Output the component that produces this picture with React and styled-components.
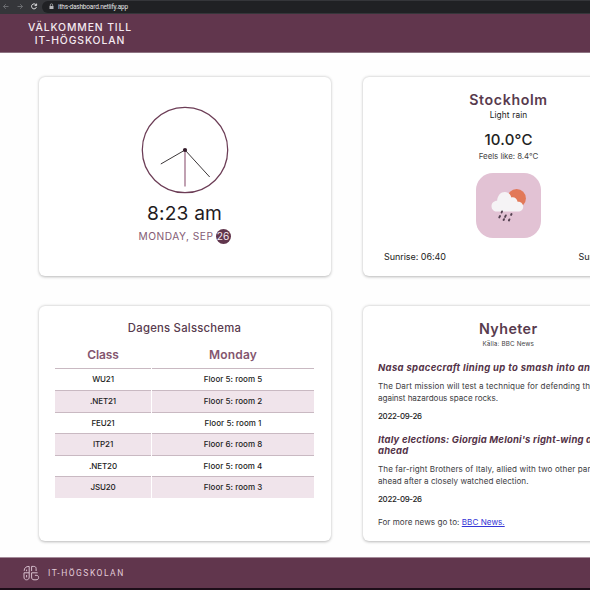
import React from 'react';
import styled, { createGlobalStyle } from 'styled-components';

const plum = '#61364d';

const GlobalStyle = createGlobalStyle`
  * { box-sizing: border-box; }
  html, body { margin: 0; overflow: hidden; background: #fff; }
  body { font-family: Inter, "Open Sans", sans-serif; color: #222; }
  h1, h2, h3, p { margin: 0; font-weight: 400; }
`;

const Page = styled.div`
  width: 100%;
  height: 590px;
  display: flex;
  flex-direction: column;
  overflow: hidden;
`;

const BrowserBar = styled.div`
  flex: 0 0 14px;
  display: flex;
  align-items: center;
  background: #35363a;
  color: #e4e4e6;
`;

const NavIcons = styled.svg`
  flex: 0 0 42px;
  height: 14px;
  fill: none;
`;

const AddressField = styled.div`
  flex: 1;
  height: 12px;
  margin-bottom: 1px;
  padding-left: 7px;
  display: flex;
  align-items: center;
  gap: 4px;
  border-radius: 6px 0 0 6px;
  background: #202124;
  font: 400 6.5px/12px Roboto, sans-serif;
  letter-spacing: -0.19px;
`;

const Header = styled.header`
  flex: 0 0 39px;
  padding: 8px 0 0 27px;
  background: ${plum};
  border-bottom: 1px solid #8d7382;
`;

const HeaderTitle = styled.h1`
  width: 106px;
  font-size: 10.4px;
  font-weight: 500;
  line-height: 12.6px;
  letter-spacing: 0.88px;
  text-align: center;
  white-space: nowrap;
  color: #f4e9f0;
`;

const Dashboard = styled.main`
  flex: 0 0 504px;
  padding: 24px 0 0 38.5px;
  display: grid;
  grid-template-columns: 292px 292px;
  grid-template-rows: 199px 235px;
  gap: 30px 32px;
  overflow: hidden;
  background: #fefefe;
`;

const Card = styled.section`
  display: flex;
  flex-direction: column;
  align-items: ${(p) => (p.$align || 'center')};
  padding: ${(p) => p.$pad};
  border-radius: 6px;
  background: #fff;
  box-shadow: 0 0.5px 3px rgba(0, 0, 0, 0.28);
  white-space: nowrap;
`;

const ClockFace = styled.svg`
  width: 88px;
  height: 88px;
  flex: none;
`;

const Time = styled.p`
  margin-top: 7px;
  font-size: 19.2px;
  line-height: 24px;
  letter-spacing: 0.18px;
  color: #1f1b1e;
`;

const DateRow = styled.div`
  margin-top: 4px;
  display: flex;
  align-items: center;
  gap: 2px;
  font-size: 10.2px;
  line-height: 15px;
  letter-spacing: 0.5px;
  color: #845b74;
`;

const DayBadge = styled.span`
  width: 15px;
  height: 15px;
  border-radius: 50%;
  background: ${plum};
  color: #f6eaf1;
  letter-spacing: -0.1px;
  text-align: center;
`;

const CardTitle = styled.h2`
  font-size: ${(p) => p.$size}px;
  font-weight: ${(p) => p.$weight || 600};
  line-height: 18px;
  letter-spacing: ${(p) => p.$spacing}px;
  text-align: center;
  color: #583b4e;
`;

const Condition = styled.p`
  margin-top: 1px;
  font-size: 8.3px;
  line-height: 11px;
  letter-spacing: 0.12px;
`;

const Temperature = styled.p`
  margin-top: 8.5px;
  font-size: 15px;
  font-weight: 500;
  line-height: 20px;
  letter-spacing: 0.2px;
`;

const FeelsLike = styled.p`
  margin-top: 1.5px;
  font-size: 7.9px;
  line-height: 11px;
  letter-spacing: -0.04px;
  color: #444;
`;

const WeatherTile = styled.div`
  width: 65px;
  height: 65px;
  margin-top: 11px;
  border-radius: 17px;
  background: #e2c2d4;
`;

const SunTimes = styled.div`
  width: 100%;
  margin-top: 13px;
  padding: 0 19px 0 21.5px;
  display: flex;
  justify-content: space-between;
  font-size: 9px;
  line-height: 12px;
  letter-spacing: -0.05px;
`;

const Schedule = styled.div`
  width: 259px;
  margin-top: 5px;
  display: grid;
  grid-template-columns: 96px 162px;
  column-gap: 1px;
  text-align: center;
`;

const ScheduleHead = styled.div`
  height: 26.4px;
  font-size: 12px;
  font-weight: 600;
  line-height: 26px;
  letter-spacing: ${(p) => p.$spacing}px;
  color: #84566f;
`;

const ScheduleCell = styled.div`
  height: 21.6px;
  border-top: 1px solid #c9b9c2;
  background: ${(p) => (p.$shaded ? '#f0e4eb' : '#fff')};
  font-size: 8px;
  font-weight: 500;
  line-height: 20.6px;
  letter-spacing: ${(p) => p.$spacing || 0}px;
`;

const Source = styled.p`
  margin-top: 2px;
  font-size: 6.3px;
  line-height: 9px;
  letter-spacing: 0.15px;
  text-align: center;
  color: #444;
`;

const Article = styled.article`
  margin-top: ${(p) => p.$top}px;
`;

const Headline = styled.h3`
  font-size: 9.5px;
  font-style: italic;
  font-weight: 700;
  line-height: 11.6px;
  letter-spacing: ${(p) => p.$spacing}px;
  color: #543348;
`;

const Summary = styled.p`
  margin-top: 6px;
  font-size: 8.1px;
  line-height: 12.4px;
  color: #3d3d3f;
`;

const SummaryLine = styled.span`
  display: block;
  letter-spacing: ${(p) => p.$spacing}px;
`;

const Published = styled.p`
  margin-top: 5px;
  font-size: 7.9px;
  font-weight: 500;
  line-height: 12px;
  letter-spacing: -0.29px;
`;

const MoreNews = styled.p`
  margin-top: 11px;
  font-size: 8.1px;
  line-height: 12px;
  letter-spacing: 0.03px;
  color: #3d3d3f;
`;

const NewsLink = styled.a`
  color: #3535d6;
  text-decoration: underline;
`;

const Footer = styled.footer`
  flex: 0 0 31px;
  padding-left: 22px;
  display: flex;
  align-items: center;
  gap: 8px;
  background: ${plum};
  border-top: 1px solid #a58c9a;
  color: #e2cbd8;
  font: 400 8.5px/12px Roboto, sans-serif;
  letter-spacing: 1.5px;
`;

const LogoMark = styled.svg`
  width: 18px;
  height: 18px;
  fill: none;
  stroke: #d8bfce;
  stroke-width: 1;
`;

const TaskbarEdge = styled.div`
  flex: 1;
  background: #1d0d19;
`;

const rooms = [
  ['WU21', 'Floor 5: room 5'],
  ['.NET21', 'Floor 5: room 2'],
  ['FEU21', 'Floor 5: room 1'],
  ['ITP21', 'Floor 6: room 8'],
  ['.NET20', 'Floor 5: room 4'],
  ['JSU20', 'Floor 5: room 3'],
];

const news = [
  {
    top: 13.2,
    spacing: 0.328,
    title: ['Nasa spacecraft lining up to smash into an asteroid'],
    text: [
      ['The Dart mission will test a technique for defending the Earth', 0.103],
      ['against hazardous space rocks.', -0.045],
    ],
  },
  {
    top: 12,
    spacing: 0.183,
    title: ["Italy elections: Giorgia Meloni's right-wing alliance", 'ahead'],
    text: [
      ['The far-right Brothers of Italy, allied with two other parties, are', 0.08],
      ['ahead after a closely watched election.', 0.025],
    ],
  },
];

function WeatherIcon() {
  return (
    <svg width="65" height="65" viewBox="0 0 65 65">
      <circle cx="40.6" cy="25.4" r="9.3" fill="#e27858" />
      <path
        d="M21 38.6C17.8 38.6 15.5 36.3 15.5 33.2C15.5 30.2 18 27.8 21.1 27.8C21.5 22.4 24.8 19 28.8 19C32 19 34.3 20.9 35.3 24.4C38 23.5 41.2 25.4 41.6 28.8C44.8 28.4 47.2 30.7 47.2 33.7C47.2 36.5 45 38.6 42.2 38.6Z"
        fill="#f5f3f5"
      />
      <path
        d="M26 38.5l-.4 1M24 43l-.7 1.4M29.8 42.4l-.7 1.5M35.5 41l-.4 .9M28 46.2l-.4 .8M33.4 46.4l-.5 1.1"
        stroke="#544151"
        strokeWidth="1.9"
        strokeLinecap="round"
      />
    </svg>
  );
}

function Clock() {
  return (
    <ClockFace viewBox="0 0 88 88">
      <circle cx="44" cy="44" r="42.7" fill="#fff" stroke="#6c3d56" strokeWidth="1.25" />
      <path d="M44 44L19.8 58M44 44l24.7 27" stroke="#3c3739" strokeWidth="1" />
      <path d="M44 44v36.5" stroke="#97637f" strokeWidth="1.2" />
      <circle cx="44" cy="44" r="2.1" fill="#351c2b" />
    </ClockFace>
  );
}

export default function App() {
  return (
    <Page>
      <GlobalStyle />
      <BrowserBar>
        <NavIcons viewBox="0 0 42 14">
          <path d="M8.5 6.5h-5M5.8 4.2L3.5 6.5l2.3 2.3M17.5 6.5h5M20.2 4.2l2.3 2.3-2.3 2.3" stroke="#77787c" strokeWidth=".8" />
          <path d="M36 4.8A2.5 2.5 0 1 0 36.4 7.2M36.6 3.6v2h-2" stroke="#e2e2e4" strokeWidth="1" />
        </NavIcons>
        <AddressField>
          <svg width="5" height="7" viewBox="0 0 5 7">
            <path d="M.5 3h4v3h-4z" fill="#b7b7ba" />
            <path d="M1.3 3V2a1.2 1.2 0 0 1 2.4 0v1" fill="none" stroke="#b7b7ba" strokeWidth=".7" />
          </svg>
          iths-dashboard.netlify.app
        </AddressField>
      </BrowserBar>
      <Header>
        <HeaderTitle>VÄLKOMMEN TILL<br />IT-HÖGSKOLAN</HeaderTitle>
      </Header>
      <Dashboard>
        <Card $pad="29px 0 0">
          <Clock />
          <Time>8:23 am</Time>
          <DateRow>MONDAY, SEP <DayBadge>26</DayBadge></DateRow>
        </Card>
        <Card $pad="14px 0 0">
          <CardTitle $size={14.2} $spacing={0.62}>Stockholm</CardTitle>
          <Condition>Light rain</Condition>
          <Temperature>10.0°C</Temperature>
          <FeelsLike>Feels like: 8.4°C</FeelsLike>
          <WeatherTile><WeatherIcon /></WeatherTile>
          <SunTimes><span>Sunrise: 06:40</span><span>Sunset: 18:42</span></SunTimes>
        </Card>
        <Card $pad="13px 0 0">
          <CardTitle $size={11.3} $weight={500} $spacing={0.24}>Dagens Salsschema</CardTitle>
          <Schedule>
            <ScheduleHead $spacing={-0.13}>Class</ScheduleHead>
            <ScheduleHead $spacing={0.2}>Monday</ScheduleHead>
            {rooms.map(([group, room], i) => (
              <React.Fragment key={group}>
                <ScheduleCell $shaded={i % 2 === 1} $spacing={-0.12}>{group}</ScheduleCell>
                <ScheduleCell $shaded={i % 2 === 1} $spacing={0.04}>{room}</ScheduleCell>
              </React.Fragment>
            ))}
          </Schedule>
        </Card>
        <Card $pad="14px 16px 0 15.5px" $align="stretch">
          <CardTitle $size={14.3} $spacing={0.4}>Nyheter</CardTitle>
          <Source>Källa: BBC News</Source>
          {news.map((item) => (
            <Article key={item.title[0]} $top={item.top}>
              {item.title.map((line) => (
                <Headline key={line} $spacing={item.spacing}>{line}</Headline>
              ))}
              <Summary>
                {item.text.map(([line, spacing]) => (
                  <SummaryLine key={line} $spacing={spacing}>{line}</SummaryLine>
                ))}
              </Summary>
              <Published>2022-09-26</Published>
            </Article>
          ))}
          <MoreNews>For more news go to: <NewsLink>BBC News.</NewsLink></MoreNews>
        </Card>
      </Dashboard>
      <Footer>
        <LogoMark viewBox="0 0 18 18">
          <path d="M2.2 6.8C2.2 3.8 4 2.4 7.2 2.4V13c0 1.9-1 2.8-2.7 2.8S2 14.8 2 13V8.8h5.2M4.6 5.6v1.6M9.6 7V2.4h2.2c1.5 0 2.3.8 2.3 2.2V7M9.6 8.8V13c0 1.9.8 2.8 2.4 2.8h2c1.7 0 2.6-.8 2.6-2.3s-.9-2.2-2.5-2.2h-1.2M9.6 8.8h6M4.6 11v2.4" />
        </LogoMark>
        IT-HÖGSKOLAN
      </Footer>
      <TaskbarEdge />
    </Page>
  );
}
